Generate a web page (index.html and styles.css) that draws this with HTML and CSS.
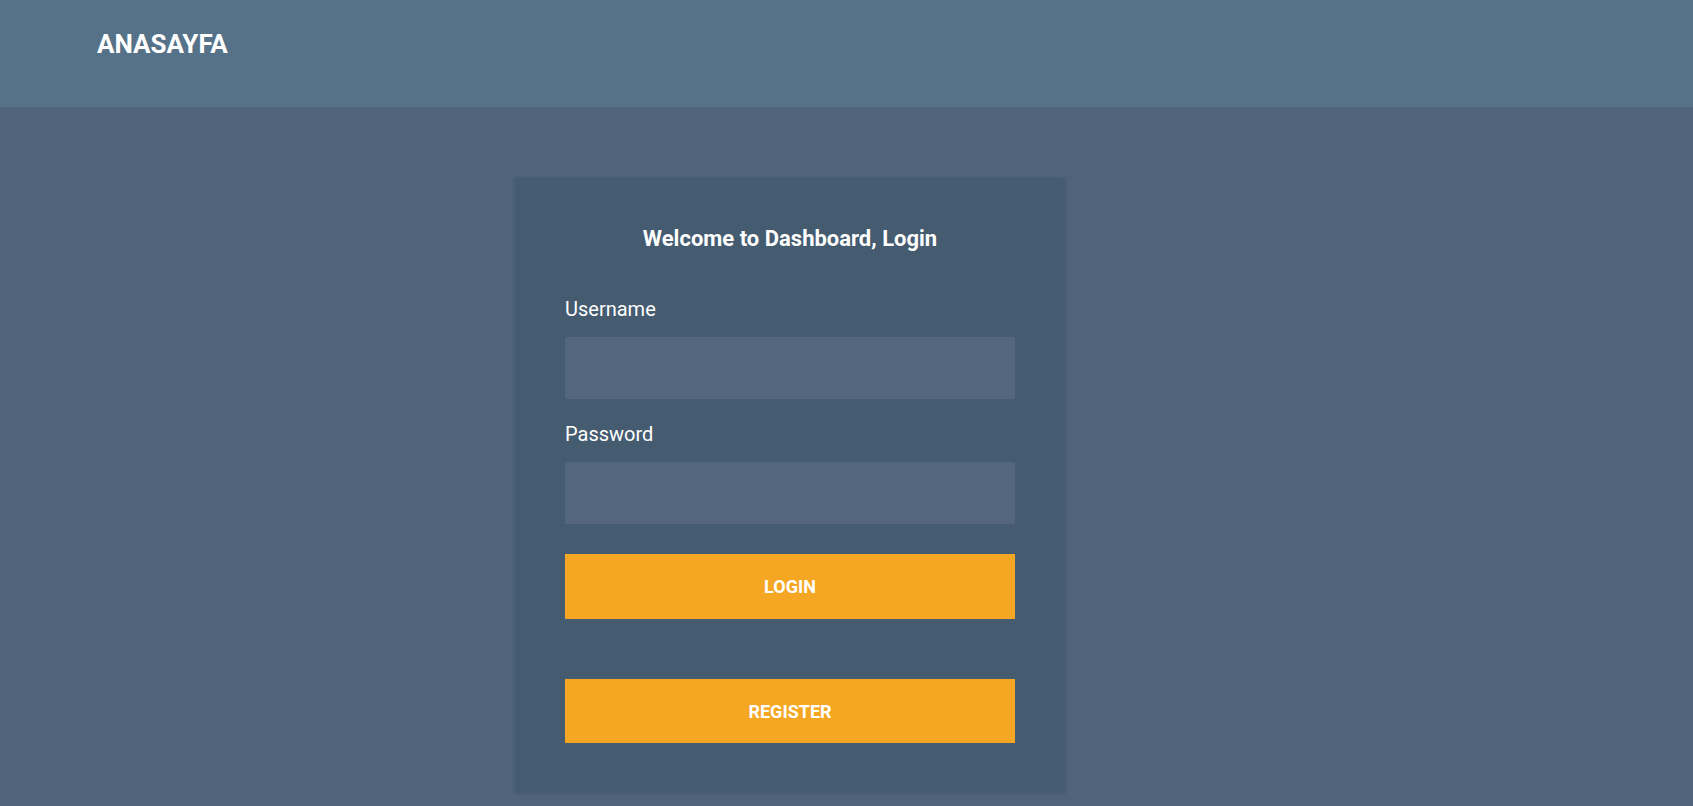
FILE: index.html
```html
<!DOCTYPE html>
<html lang="tr">
<head>
<meta charset="utf-8">
<title>Anasayfa</title>
<link rel="stylesheet" href="styles.css">
</head>
<body>
<header class="topbar">
  <a class="brand" href="#">ANASAYFA</a>
</header>
<main class="page">
  <form class="card">
    <h2 class="card-title">Welcome to Dashboard, Login</h2>
    <label class="field-label" for="username">Username</label>
    <input class="field-input" id="username" type="text">
    <label class="field-label second" for="password">Password</label>
    <input class="field-input" id="password" type="password">
    <button class="btn login" type="button">LOGIN</button>
    <button class="btn register" type="button">REGISTER</button>
  </form>
</main>
</body>
</html>
```
FILE: styles.css
```css
* { box-sizing: border-box; }
html, body {
  margin: 0;
  padding: 0;
  height: 100%;
}
body {
  background: #4f6479;
  font-family: Roboto, "Liberation Sans", sans-serif;
  color: #ffffff;
  overflow: hidden;
}
.topbar {
  height: 107px;
  background: #567288;
  padding: 29px 0 0 97px;
}
.brand {
  color: #ffffff;
  text-decoration: none;
  font-weight: 700;
  font-size: 26px;
  line-height: 30px;
  display: inline-block;
}
.page {
  padding: 71px 0 0 515px;
}
.card {
  width: 550px;
  background: #455b70;
  padding: 49px 50px 50px;
  display: flex;
  flex-direction: column;
  box-shadow: 0 0 3px rgba(40, 55, 70, 0.25);
}
.card-title {
  margin: 0 0 47px;
  text-align: center;
  font-size: 22px;
  line-height: 24px;
  font-weight: 700;
}
.field-label {
  font-size: 20px;
  line-height: 22px;
  margin-bottom: 17px;
}
.field-label.second {
  margin-top: 24px;
}
.field-input {
  height: 62px;
  border: none;
  background: #54667e;
  outline: none;
  color: #ffffff;
  font-family: inherit;
  font-size: 16px;
  padding: 0 14px;
}
.btn {
  height: 65px;
  border: none;
  background: #f5a623;
  color: #ffffff;
  font-family: inherit;
  font-weight: 700;
  font-size: 18px;
  cursor: pointer;
}
.btn.login {
  margin-top: 30px;
}
.btn.register {
  margin-top: 60px;
  height: 64px;
}
```
